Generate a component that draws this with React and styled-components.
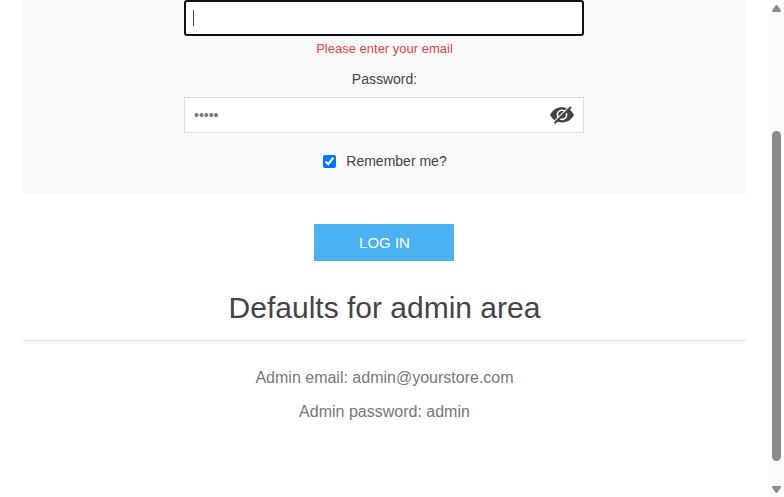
import React from 'react';
import styled, { createGlobalStyle } from 'styled-components';

const GlobalStyle = createGlobalStyle`
  * { box-sizing: border-box; }
  body {
    margin: 0;
    overflow: hidden;
    background: #fff;
    color: #444;
    font: 14px "Liberation Sans", Arial, Helvetica, sans-serif;
  }
`;

const Window = styled.div`
  display: flex;
  width: 784px;
  height: 497px;
`;

const Page = styled.main`
  flex: 1;
  display: flex;
  flex-direction: column;
  align-items: center;
  padding: 0 23px;
`;

const Fields = styled.section`
  width: 100%;
  height: 194px;
  display: flex;
  flex-direction: column;
  align-items: center;
  background: #f9f9f9;
`;

const Field = styled.div`
  width: 400px;
  height: 36px;
  flex: none;
  display: flex;
  align-items: center;
  justify-content: space-between;
  margin-right: 1px;
  padding: ${(p) => (p.$focused ? '0 7px' : '0 9px')};
  border: ${(p) => (p.$focused ? '2px solid #101010' : '1px solid #ddd')};
  border-radius: ${(p) => (p.$focused ? '3px' : '0')};
  background: #fff;
  color: #777;
`;

const Caret = styled.span`
  width: 1px;
  height: 16px;
  background: #444;
`;

const ErrorText = styled.span`
  margin-top: 5px;
  font-size: 13px;
  line-height: 15px;
  color: #e4434b;
`;

const Label = styled.label`
  margin: 15px 0 10px;
  line-height: 16px;
`;

const Remember = styled.label`
  display: flex;
  align-items: center;
  gap: 10px;
  margin-top: 20px;
  padding-left: 1px;
  line-height: 16px;
`;

const Checkbox = styled.input`
  width: 13px;
  height: 13px;
  margin: 0;
`;

const LoginButton = styled.button`
  width: 140px;
  height: 37px;
  flex: none;
  margin: 30px 1px 0 0;
  padding: 0 0 0 1px;
  border: 0;
  background: #4ab2f1;
  color: #fff;
  font: 15px "Liberation Sans", Arial, sans-serif;
  text-transform: uppercase;
`;

const Title = styled.h2`
  width: 100%;
  height: 80px;
  margin: 0;
  padding-top: 29px;
  border-bottom: 1px solid #ddd;
  font-size: 30px;
  line-height: 35px;
  font-weight: 400;
  text-align: center;
`;

const Notes = styled.div`
  padding-top: 27px;
  color: #777;
  font-size: 16px;
  line-height: 20px;
  text-align: center;
`;

const Note = styled.p`
  margin: 0 0 14px;
`;

const Scrollbar = styled.div`
  width: 15px;
  display: flex;
  flex-direction: column;
  align-items: center;
  background: #fcfcfc;
`;

const Arrow = styled.svg`
  width: 9px;
  height: 7px;
  flex: none;
  margin-top: ${(p) => p.$top}px;
  fill: #8b8b8b;
`;

const Thumb = styled.div`
  width: 9px;
  height: 330px;
  margin-top: 119px;
  border-radius: 5px;
  background: #8b8b8b;
`;

function HiddenEye() {
  return (
    <svg width="24" height="18" viewBox="0 0 24 18">
      <path d="M0 9C3 3.4 7 1.2 12 1.2S21 3.4 24 9C21 14.2 17 16.4 12 16.4S3 14.2 0 9Z" fill="#444" />
      <circle cx="12" cy="8.8" r="4.6" fill="none" stroke="#fff" strokeWidth="1.6" />
      <path d="M3.2 16.4 19.3.6" stroke="#fff" strokeWidth="1.3" />
      <path d="M4.5 17.2 21 1" stroke="#444" strokeWidth="2" />
    </svg>
  );
}

export default function App() {
  return (
    <>
      <GlobalStyle />
      <Window>
        <Page>
          <Fields>
            <Field $focused><Caret /></Field>
            <ErrorText>Please enter your email</ErrorText>
            <Label>Password:</Label>
            <Field>
              <span>•••••</span>
              <HiddenEye />
            </Field>
            <Remember>
              <Checkbox type="checkbox" defaultChecked />
              Remember me?
            </Remember>
          </Fields>
          <LoginButton>Log in</LoginButton>
          <Title>Defaults for admin area</Title>
          <Notes>
            <Note>Admin email: admin@yourstore.com</Note>
            <Note>Admin password: admin</Note>
          </Notes>
        </Page>
        <Scrollbar>
          <Arrow $top={5} viewBox="0 0 9 7"><path d="M0 6Q0 5 3.4.8Q4.5-.8 5.6.8Q9 5 9 6Q9 7 8 7H1Q0 7 0 6Z" /></Arrow>
          <Thumb />
          <Arrow $top={25} viewBox="0 0 9 7"><path d="M0 1Q0 0 1 0H8Q9 0 9 1Q9 2 5.6 6.2Q4.5 7.8 3.4 6.2Q0 2 0 1Z" /></Arrow>
        </Scrollbar>
      </Window>
    </>
  );
}
